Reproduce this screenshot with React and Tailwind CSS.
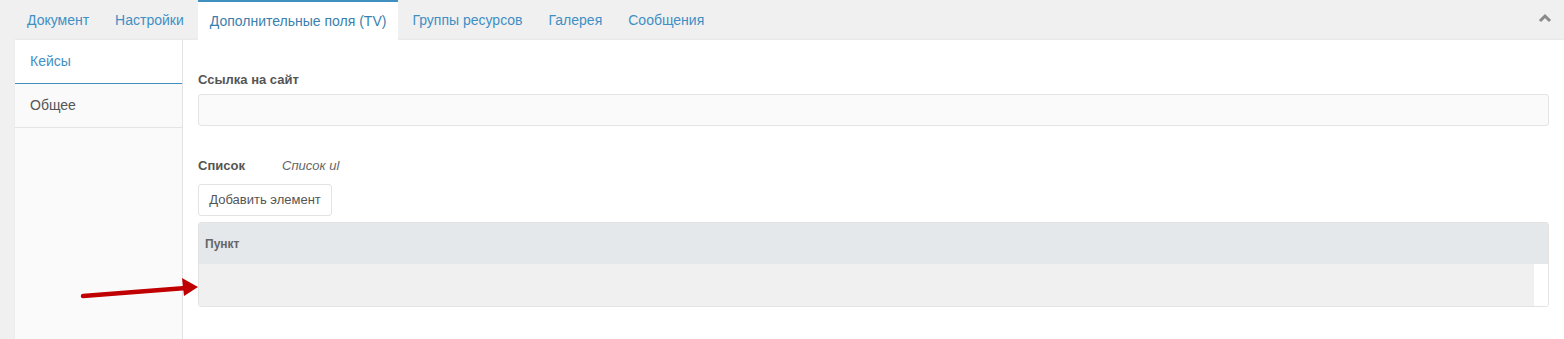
import React from 'react';

const tabs = ['Документ', 'Настройки', 'Дополнительные поля (TV)', 'Группы ресурсов', 'Галерея', 'Сообщения'];

const App = () => {
  return (
    <div className="w-[1564px] h-[339px] bg-[#f0f0f0] overflow-hidden relative" style={{ fontFamily: '"Liberation Sans", Arial, sans-serif' }}>
      {/* top tabs */}
      <div className="h-[40px] flex items-stretch pl-[15px] gap-[2px] relative">
        {tabs.map((t, i) => (
          <div
            key={t}
            className={`px-[12px] flex items-center text-[14px] ${i === 2 ? 'bg-white border-t-2 border-[#3f8fbf] text-[#3a7fae]' : 'text-[#3f8fc4]'}`}
          >
            {t}
          </div>
        ))}
        <div className="absolute right-[12px] top-[12px]">
          <svg width="14" height="12" viewBox="0 0 14 12">
            <path d="M2 9 L7 4 L12 9" fill="none" stroke="#8a8a8a" strokeWidth="3" />
          </svg>
        </div>
      </div>

      {/* panel */}
      <div className="ml-[15px] bg-white h-[299px] flex shadow-[0_-1px_2px_rgba(0,0,0,0.04)]">
        <div className="w-[168px] bg-[#fafafa] border-r border-[#e2e2e2] flex flex-col">
          <div className="h-[44px] bg-white border-b border-[#3f8fbf] flex items-center pl-[15px] text-[14px] text-[#3f8fc4]">Кейсы</div>
          <div className="h-[44px] border-b border-[#e4e4e4] flex items-center pl-[15px] text-[14px] text-[#555]">Общее</div>
        </div>

        <div className="flex-1 pl-[15px] pr-[15px] pt-[32px]">
          <div className="text-[13px] font-bold text-[#555] leading-[16px]">Ссылка на сайт</div>
          <div className="mt-[6px] h-[32px] bg-[#fafafa] border border-[#e3e3e3] rounded-[3px]"></div>

          <div className="mt-[32px] flex items-center text-[13px] leading-[16px]">
            <span className="font-bold text-[#555] w-[84px]">Список</span>
            <span className="italic text-[#666]">Список ul</span>
          </div>
          <div className="mt-[10px] w-[134px] h-[32px] border border-[#e3e3e3] rounded-[3px] bg-white flex items-center justify-center text-[13px] text-[#555]">
            Добавить элемент
          </div>

          <div className="mt-[6px] border border-[#e3e3e3] rounded-[3px] overflow-hidden">
            <div className="h-[41px] bg-[#e4e8eb] flex items-center pl-[6px] text-[12px] font-bold text-[#666]">Пункт</div>
            <div className="h-[42px] flex">
              <div className="flex-1 bg-[#f0f0f0]"></div>
              <div className="w-[14px] bg-white"></div>
            </div>
          </div>
        </div>
      </div>

      {/* red arrow annotation */}
      <svg className="absolute left-0 top-0 pointer-events-none" width="1564" height="339">
        <line x1="83" y1="296" x2="186" y2="288" stroke="#c00000" strokeWidth="4.5" strokeLinecap="round" />
        <polygon points="182,278 198,287 184,296" fill="#c00000" />
      </svg>
    </div>
  );
};

export default App;
